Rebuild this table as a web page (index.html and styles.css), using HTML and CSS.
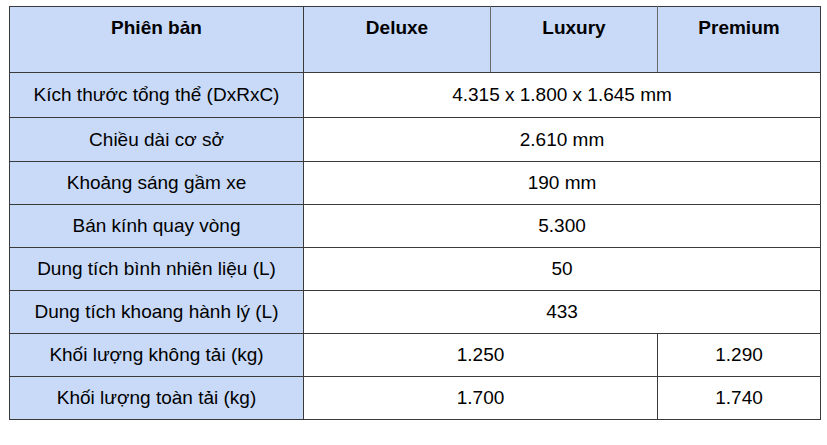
FILE: index.html
```html
<!DOCTYPE html>
<html lang="vi">
<head>
<meta charset="utf-8">
<title>Thông số kỹ thuật</title>
<link rel="stylesheet" href="styles.css">
</head>
<body>
<table class="spec">
  <colgroup>
    <col class="c-label">
    <col class="c-deluxe">
    <col class="c-luxury">
    <col class="c-premium">
  </colgroup>
  <thead>
    <tr class="head-row">
      <th class="label">Phiên bản</th>
      <th>Deluxe</th>
      <th>Luxury</th>
      <th>Premium</th>
    </tr>
  </thead>
  <tbody>
    <tr class="r-first">
      <td class="label">Kích thước tổng thể (DxRxC)</td>
      <td colspan="3">4.315 x 1.800 x 1.645 mm</td>
    </tr>
    <tr class="r-second">
      <td class="label">Chiều dài cơ sở</td>
      <td colspan="3">2.610 mm</td>
    </tr>
    <tr>
      <td class="label">Khoảng sáng gầm xe</td>
      <td colspan="3">190 mm</td>
    </tr>
    <tr>
      <td class="label">Bán kính quay vòng</td>
      <td colspan="3">5.300</td>
    </tr>
    <tr>
      <td class="label">Dung tích bình nhiên liệu (L)</td>
      <td colspan="3">50</td>
    </tr>
    <tr>
      <td class="label">Dung tích khoang hành lý (L)</td>
      <td colspan="3">433</td>
    </tr>
    <tr>
      <td class="label">Khối lượng không tải (kg)</td>
      <td colspan="2">1.250</td>
      <td class="v-sep">1.290</td>
    </tr>
    <tr>
      <td class="label">Khối lượng toàn tải (kg)</td>
      <td colspan="2">1.700</td>
      <td class="v-sep">1.740</td>
    </tr>
  </tbody>
</table>
</body>
</html>
```
FILE: styles.css
```css
html, body {
  margin: 0;
  padding: 0;
  background: #ffffff;
}

body {
  padding: 6px 0 0 9px;
  font-family: "Liberation Sans", Arial, sans-serif;
  font-size: 19px;
  color: #000000;
}

.spec {
  border-collapse: collapse;
  table-layout: fixed;
  width: 811px;
}

.c-label { width: 294px; }
.c-deluxe { width: 187px; }
.c-luxury { width: 167px; }
.c-premium { width: 163px; }

.spec th,
.spec td {
  border: 1px solid #3a3a3a;
  text-align: center;
  padding: 0 4px;
  line-height: 21px;
}

.spec th {
  background: #c9daf8;
  font-weight: bold;
  vertical-align: top;
  padding-top: 10px;
  height: 55px;
  border-left-color: #6a6a6a;
  border-right-color: #6a6a6a;
}

.spec th.label {
  border-left-color: #3a3a3a;
  border-right-color: #3a3a3a;
}

.spec th:last-child {
  border-right-color: #3a3a3a;
}

.spec td {
  vertical-align: middle;
  height: 42px;
  padding-top: 0;
  padding-bottom: 1px;
}

.spec tr.r-first td { height: 43px; }
.spec tr.r-second td { height: 42px; }
.spec tr td { height: 41px; }
.spec tr.r-first td { height: 43px; }
.spec tr.r-second td { height: 42px; }

.spec td.label {
  background: #c9daf8;
}

.spec td.v-sep {
  border-left-color: #6a6a6a;
}
```
